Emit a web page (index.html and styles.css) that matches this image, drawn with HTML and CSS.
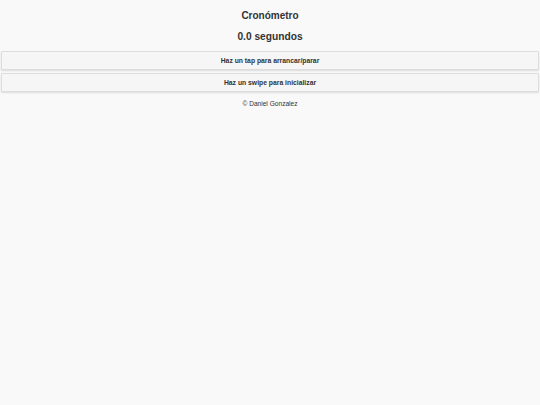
FILE: index.html
```html
<!DOCTYPE html>
<html lang="es">
<head>
<meta charset="utf-8">
<title>Cronómetro</title>
<link rel="stylesheet" href="styles.css">
</head>
<body>
<div class="page">
  <h1 class="title">Cronómetro</h1>
  <h2 class="time">0.0 segundos</h2>
  <div class="buttons">
    <div class="btn">Haz un tap para arrancar/parar</div>
    <div class="btn">Haz un swipe para inicializar</div>
  </div>
  <p class="footer">© Daniel Gonzalez</p>
</div>
</body>
</html>
```
FILE: styles.css
```css
html, body {
  margin: 0;
  padding: 0;
  background: #f9f9f9;
  font-family: "Liberation Sans", Arial, Helvetica, sans-serif;
  color: #333;
}
.page {
  display: flex;
  flex-direction: column;
  min-height: 405px;
}
.title {
  margin: 0;
  padding-top: 10px;
  font-size: 10px;
  line-height: 12px;
  font-weight: bold;
  text-align: center;
}
.time {
  margin: 0;
  padding-top: 9px;
  font-size: 10.2px;
  line-height: 12px;
  font-weight: bold;
  text-align: center;
}
.buttons {
  display: flex;
  flex-direction: column;
  gap: 3px;
  margin-top: 8px;
  padding: 0 1px;
}
.btn {
  height: 17px;
  line-height: 17px;
  background: #f6f6f6;
  border: 1px solid #dddddd;
  border-radius: 1px;
  box-shadow: 0 1px 2px rgba(0, 0, 0, 0.12);
  font-size: 6.8px;
  font-weight: bold;
  text-align: center;
  color: #333;
}
.footer {
  margin: 8px 0 0;
  font-size: 6.6px;
  line-height: 8px;
  text-align: center;
  color: #333;
}
```
